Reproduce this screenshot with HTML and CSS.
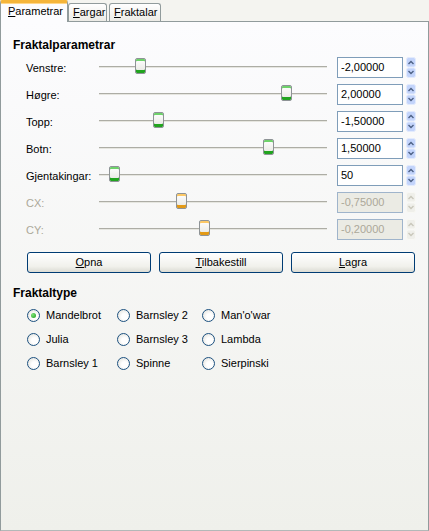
FILE: index.html
```html
<!DOCTYPE html>
<html>
<head>
<meta charset="utf-8">
<link rel="stylesheet" href="styles.css">
</head>
<body>
<div class="window">
  <div class="tabs">
    <div class="tab active"><u>P</u>arametrar</div>
    <div class="tab t-fargar"><u>F</u>argar</div>
    <div class="tab t-fraktalar"><u>F</u>raktalar</div>
  </div>
  <div class="panel">
    <div class="section-title">Fraktalparametrar</div>
    <div class="params">
      <div class="param">
        <span class="plabel">Venstre:</span>
        <div class="slider"><div class="track"></div><div class="thumb" style="left:36px"></div></div>
        <div class="entry">-2,00000</div>
        <svg class="spinsvg" width="10" height="21" viewBox="0 0 10 21"><rect class="sb" x="0.5" y="0.5" width="9" height="9.5" rx="2"/><rect class="sb" x="0.5" y="11" width="9" height="9.5" rx="2"/><path class="ar" d="M2.5 7 L5 4.5 L7.5 7"/><path class="ar" d="M2.5 14 L5 16.5 L7.5 14"/></svg>
      </div>
      <div class="param">
        <span class="plabel">Høgre:</span>
        <div class="slider"><div class="track"></div><div class="thumb" style="left:182px"></div></div>
        <div class="entry">2,00000</div>
        <svg class="spinsvg" width="10" height="21" viewBox="0 0 10 21"><rect class="sb" x="0.5" y="0.5" width="9" height="9.5" rx="2"/><rect class="sb" x="0.5" y="11" width="9" height="9.5" rx="2"/><path class="ar" d="M2.5 7 L5 4.5 L7.5 7"/><path class="ar" d="M2.5 14 L5 16.5 L7.5 14"/></svg>
      </div>
      <div class="param">
        <span class="plabel">Topp:</span>
        <div class="slider"><div class="track"></div><div class="thumb" style="left:54px"></div></div>
        <div class="entry">-1,50000</div>
        <svg class="spinsvg" width="10" height="21" viewBox="0 0 10 21"><rect class="sb" x="0.5" y="0.5" width="9" height="9.5" rx="2"/><rect class="sb" x="0.5" y="11" width="9" height="9.5" rx="2"/><path class="ar" d="M2.5 7 L5 4.5 L7.5 7"/><path class="ar" d="M2.5 14 L5 16.5 L7.5 14"/></svg>
      </div>
      <div class="param">
        <span class="plabel">Botn:</span>
        <div class="slider"><div class="track"></div><div class="thumb" style="left:164px"></div></div>
        <div class="entry">1,50000</div>
        <svg class="spinsvg" width="10" height="21" viewBox="0 0 10 21"><rect class="sb" x="0.5" y="0.5" width="9" height="9.5" rx="2"/><rect class="sb" x="0.5" y="11" width="9" height="9.5" rx="2"/><path class="ar" d="M2.5 7 L5 4.5 L7.5 7"/><path class="ar" d="M2.5 14 L5 16.5 L7.5 14"/></svg>
      </div>
      <div class="param">
        <span class="plabel">Gjentakingar:</span>
        <div class="slider"><div class="track"></div><div class="thumb" style="left:10px"></div></div>
        <div class="entry">50</div>
        <svg class="spinsvg" width="10" height="21" viewBox="0 0 10 21"><rect class="sb" x="0.5" y="0.5" width="9" height="9.5" rx="2"/><rect class="sb" x="0.5" y="11" width="9" height="9.5" rx="2"/><path class="ar" d="M2.5 7 L5 4.5 L7.5 7"/><path class="ar" d="M2.5 14 L5 16.5 L7.5 14"/></svg>
      </div>
      <div class="param disabled">
        <span class="plabel">CX:</span>
        <div class="slider"><div class="track"></div><div class="thumb" style="left:77px"></div></div>
        <div class="entry">-0,75000</div>
        <svg class="spinsvg" width="10" height="21" viewBox="0 0 10 21"><rect class="sb" x="0.5" y="0.5" width="9" height="9.5" rx="2"/><rect class="sb" x="0.5" y="11" width="9" height="9.5" rx="2"/><path class="ar" d="M2.5 7 L5 4.5 L7.5 7"/><path class="ar" d="M2.5 14 L5 16.5 L7.5 14"/></svg>
      </div>
      <div class="param disabled">
        <span class="plabel">CY:</span>
        <div class="slider"><div class="track"></div><div class="thumb" style="left:100px"></div></div>
        <div class="entry">-0,20000</div>
        <svg class="spinsvg" width="10" height="21" viewBox="0 0 10 21"><rect class="sb" x="0.5" y="0.5" width="9" height="9.5" rx="2"/><rect class="sb" x="0.5" y="11" width="9" height="9.5" rx="2"/><path class="ar" d="M2.5 7 L5 4.5 L7.5 7"/><path class="ar" d="M2.5 14 L5 16.5 L7.5 14"/></svg>
      </div>
    </div>
    <div class="buttons">
      <div class="btn"><u>O</u>pna</div>
      <div class="btn"><u>T</u>ilbakestill</div>
      <div class="btn"><u>L</u>agra</div>
    </div>
    <div class="section-title title2">Fraktaltype</div>
    <div class="radios">
      <div class="radio checked"><span class="rb"></span>Mandelbrot</div>
      <div class="radio"><span class="rb"></span>Barnsley 2</div>
      <div class="radio"><span class="rb"></span>Man'o'war</div>
      <div class="radio"><span class="rb"></span>Julia</div>
      <div class="radio"><span class="rb"></span>Barnsley 3</div>
      <div class="radio"><span class="rb"></span>Lambda</div>
      <div class="radio"><span class="rb"></span>Barnsley 1</div>
      <div class="radio"><span class="rb"></span>Spinne</div>
      <div class="radio"><span class="rb"></span>Sierpinski</div>
    </div>
  </div>
</div>
</body>
</html>
```

FILE: styles.css
```css
html, body {
  margin: 0;
  padding: 0;
}
body {
  font-family: "Liberation Sans", Arial, sans-serif;
  font-size: 11px;
  color: #000;
  background: #f4f4f0;
}
.window {
  width: 429px;
  height: 531px;
  display: flex;
  flex-direction: column;
}
.tabs {
  height: 21px;
  display: flex;
  align-items: flex-end;
  position: relative;
  z-index: 2;
}
.tab {
  box-sizing: border-box;
  height: 18px;
  border: 1px solid #919b9c;
  border-bottom: none;
  border-radius: 3px 3px 0 0;
  background: linear-gradient(#ffffff, #ecebe6);
  line-height: 17px;
  padding: 0 4px;
  margin-right: 2px;
}
.tab.active {
  height: 22px;
  margin-bottom: -1px;
  width: 68px;
  padding-left: 7px;
  margin-right: 0;
  background: #fcfcfe;
  border-top: 3px solid #f5b53a;
  border-radius: 2px 2px 0 0;
  line-height: 17px;
  box-shadow: inset 0 1px 0 #ffd68a;
}
.t-fargar {
  width: 39px;
}
.t-fraktalar {
  width: 52px;
}
.panel {
  flex: 1;
  box-sizing: border-box;
  border: 1px solid #919b9c;
  border-bottom-color: #b3b8b8;
  background: linear-gradient(#fcfcfe, #eff0eb);
  padding: 15px 12px 0 12px;
}
.section-title {
  font-weight: bold;
  font-size: 12px;
  line-height: 16px;
}
.title2 {
  margin-top: 12px;
}
.params {
  margin-top: 1px;
  padding-left: 13px;
}
.param {
  display: flex;
  align-items: center;
  height: 27px;
}
.plabel {
  width: 73px;
  flex: none;
}
.slider {
  position: relative;
  width: 228px;
  height: 27px;
  flex: none;
}
.track {
  position: absolute;
  left: 0;
  right: 0;
  top: 12px;
  height: 1px;
  background: #adada5;
  border-bottom: 1px solid #e6e6e0;
}
.thumb {
  position: absolute;
  top: 4px;
  width: 11px;
  height: 16px;
  box-sizing: border-box;
  border: 1px solid #8e9396;
  border-radius: 2px;
  background: linear-gradient(#ffffff, #e6e6e0);
  box-shadow: inset 0 2px 0 #6ed26a, inset 0 -3px 0 #21a41f;
}
.disabled .thumb {
  box-shadow: inset 0 2px 0 #fcc866, inset 0 -3px 0 #e39a16;
}
.entry {
  margin-left: 10px;
  width: 66px;
  height: 21px;
  box-sizing: border-box;
  border: 1px solid #7f9db9;
  background: #fff;
  line-height: 19px;
  padding-left: 3px;
  flex: none;
}
.spinsvg {
  margin-left: 3px;
  flex: none;
}
.sb {
  fill: #c3d4fb;
  stroke: #e3ebfd;
  stroke-width: 1;
}
.ar {
  fill: none;
  stroke: #4d6185;
  stroke-width: 1.4;
}
.disabled .plabel {
  color: #aca899;
}
.disabled .entry {
  background: #ebebe4;
  color: #aca899;
  border-color: #9fb4cb;
}
.disabled .sb {
  fill: #efefea;
  stroke: #f8f8f4;
}
.disabled .ar {
  stroke: #c9c7ba;
}
.buttons {
  display: flex;
  gap: 8px;
  padding-left: 14px;
  margin-top: 9px;
}
.btn {
  width: 124px;
  height: 21px;
  box-sizing: border-box;
  border: 1px solid #003c74;
  border-radius: 3px;
  background: linear-gradient(#ffffff, #f1f1ec 70%, #dcdcd4);
  text-align: center;
  line-height: 19px;
}
.radios {
  display: grid;
  grid-template-columns: 90px 85px 100px;
  grid-auto-rows: 24px;
  padding-left: 14px;
  margin-top: 2px;
}
.radio {
  display: flex;
  align-items: center;
  gap: 6px;
}
.rb {
  width: 13px;
  height: 13px;
  box-sizing: border-box;
  border: 1px solid #1c5180;
  border-radius: 50%;
  background: radial-gradient(circle at 60% 60%, #ffffff 30%, #dcdcd5 100%);
  display: flex;
  align-items: center;
  justify-content: center;
  flex: none;
}
.checked .rb::after {
  content: "";
  width: 5px;
  height: 5px;
  border-radius: 50%;
  background: radial-gradient(circle at 35% 35%, #7de477, #1d9b1d);
}
```
